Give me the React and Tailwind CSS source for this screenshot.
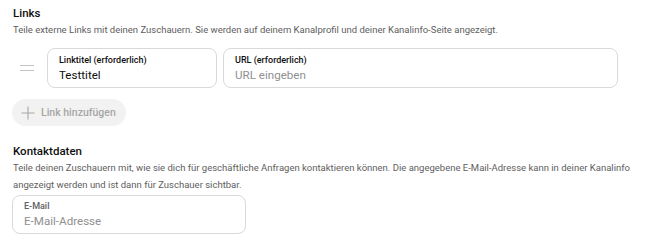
import React from 'react';

function Field({ label, value, placeholder, className, labelColor = 'text-[#0f0f0f]' }) {
  return (
    <div className={`flex flex-col justify-center rounded-[8px] border border-[#d9d9d9] bg-white px-[11px] ${className}`}>
      <span className={`text-[9px] font-medium leading-[12px] ${labelColor}`}>{label}</span>
      {value ? (
        <span className="text-[11.6px] leading-[16px] text-[#0f0f0f] mt-[1px]">{value}</span>
      ) : (
        <span className="text-[11.6px] leading-[16px] text-[#8f8f8f] mt-[1px]">{placeholder}</span>
      )}
    </div>
  );
}

export default function App() {
  return (
    <div className="w-[650px] h-[246px] overflow-hidden bg-white pl-[13px] pt-[5px] font-['Roboto',sans-serif]">
      {/* Links */}
      <h2 className="text-[11.5px] font-medium leading-[16px] text-[#0f0f0f]">Links</h2>
      <p className="text-[9.5px] leading-[14px] text-[#606060] mt-[2px]">
        Teile externe Links mit deinen Zuschauern. Sie werden auf deinem Kanalprofil und deiner Kanalinfo-Seite angezeigt.
      </p>

      <div className="flex items-center mt-[11px]">
        <div className="w-[34px] flex justify-start pl-[7px]">
          <div className="flex flex-col gap-[3.5px]">
            <div className="w-[14px] h-[1.2px] bg-[#c4c4c4]" />
            <div className="w-[14px] h-[1.2px] bg-[#c4c4c4]" />
          </div>
        </div>
        <Field label="Linktitel (erforderlich)" value="Testtitel" className="w-[170px] h-[40px]" />
        <Field label="URL (erforderlich)" placeholder="URL eingeben" className="w-[395px] h-[40px] ml-[6px]" />
      </div>

      <button className="mt-[11px] -ml-[1px] flex items-center gap-[6px] h-[27px] w-[114px] rounded-full bg-[#f2f2f2] pl-[9px] text-[10.5px] font-medium text-[#a6a6a6]">
        <svg width="14" height="14" viewBox="0 0 14 14" fill="none" stroke="#a6a6a6" strokeWidth="1.1">
          <path d="M7 0.5V13.5M0.5 7H13.5" />
        </svg>
        Link hinzufügen
      </button>

      {/* Kontaktdaten */}
      <h2 className="mt-[17px] text-[11.5px] font-medium leading-[16px] text-[#0f0f0f]">Kontaktdaten</h2>
      <p className="text-[9.5px] leading-[17px] text-[#606060]">
        Teile deinen Zuschauern mit, wie sie dich für geschäftliche Anfragen kontaktieren können. Die angegebene E-Mail-Adresse kann in deiner Kanalinfo
        <br />
        angezeigt werden und ist dann für Zuschauer sichtbar.
      </p>

      <Field
        label="E-Mail"
        placeholder="E-Mail-Adresse"
        labelColor="text-[#606060]"
        className="mt-[2px] -ml-[1px] w-[234px] h-[39px]"
      />
    </div>
  );
}
